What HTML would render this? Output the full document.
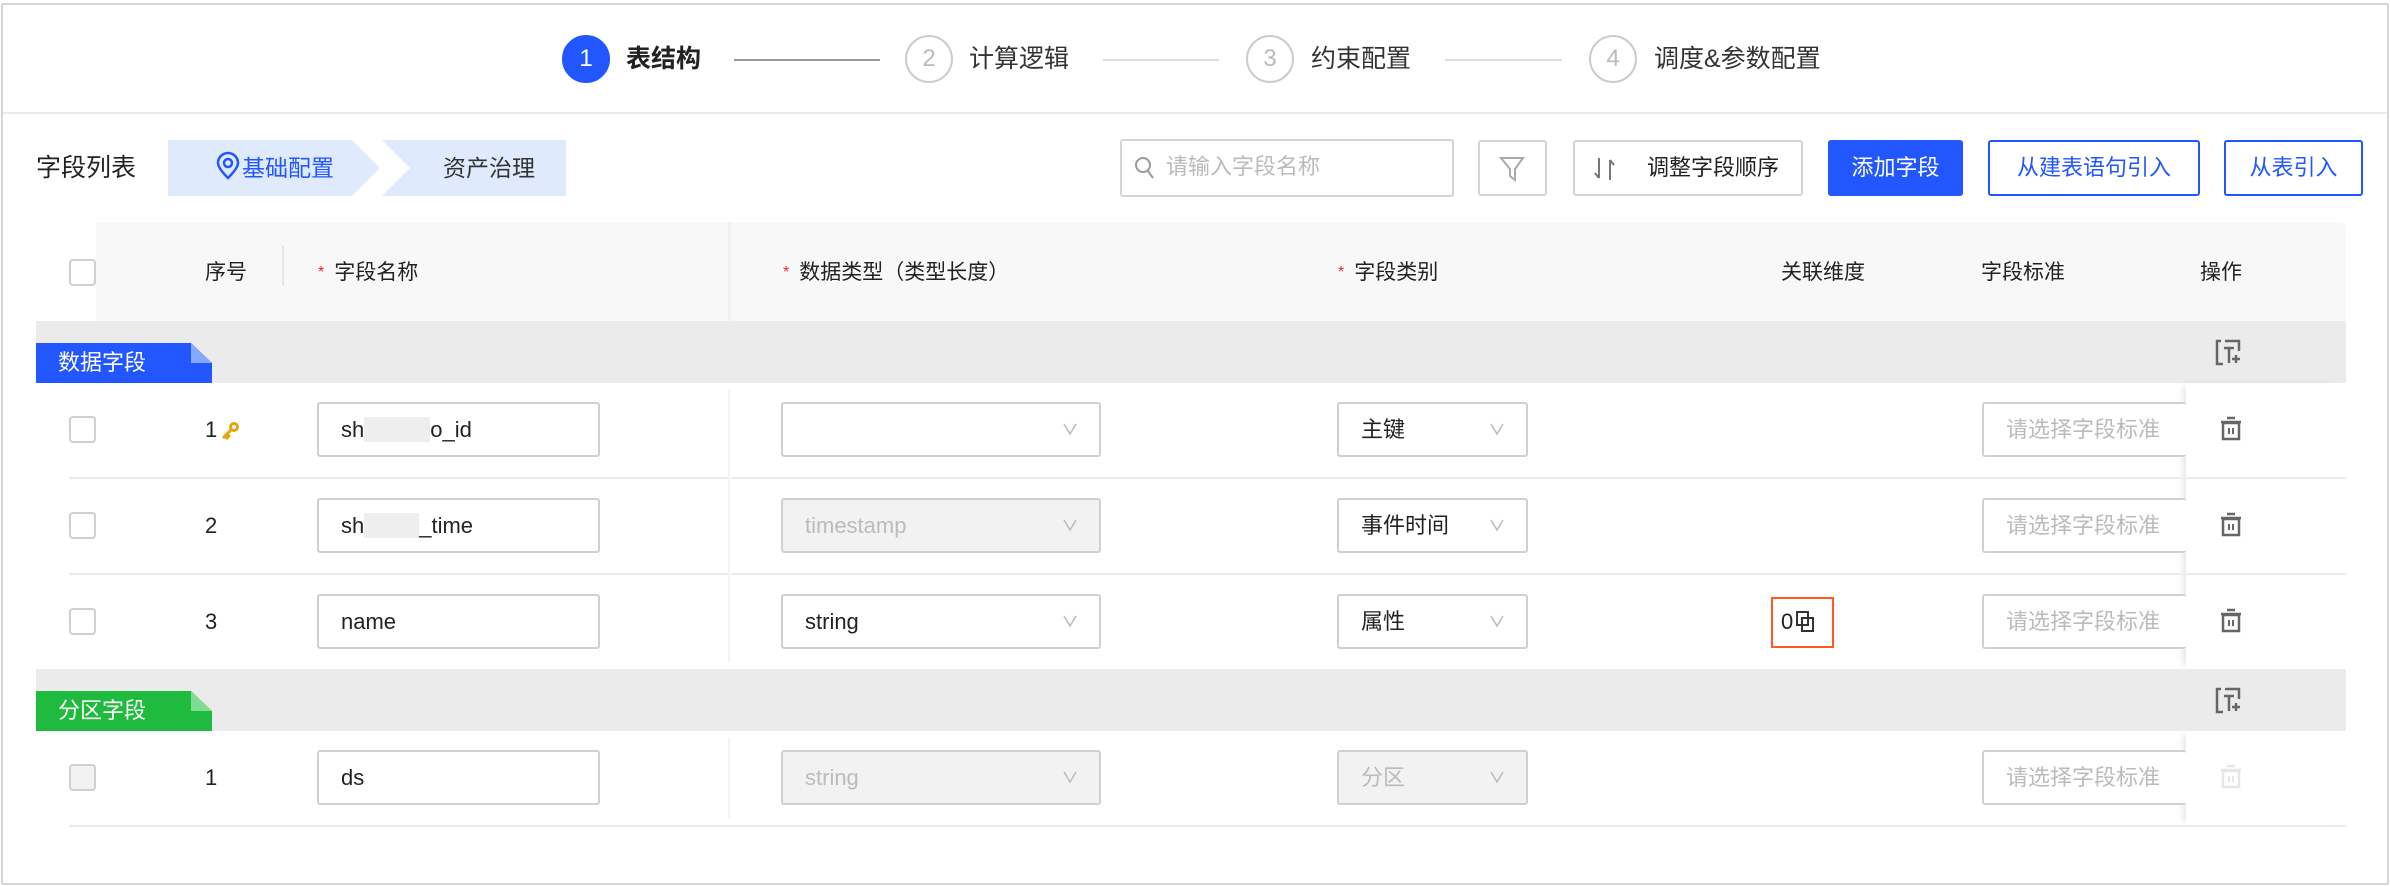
<!DOCTYPE html>
<html><head><meta charset="utf-8"><style>
*{margin:0;padding:0;box-sizing:border-box}
body{width:2390px;height:886px;background:#fff;font-family:"Liberation Sans","Noto Sans CJK SC",sans-serif;color:#222;position:relative;overflow:hidden;font-size:22px}
.a{position:absolute}
.frame{left:1px;top:3px;width:2388px;height:882px;border:2px solid #d6d6d6;border-radius:2px}
.circ{width:48px;height:48px;border-radius:50%;border:2px solid #ccc;color:#bbb;font-size:24px;text-align:center;line-height:44px;top:35px}
.stxt{top:42px;font-size:25px;color:#333;line-height:34px}
.sline{top:59px;height:2px;background:#ddd}
.btn{top:140px;height:56px;border:2px solid #d4d4d4;border-radius:3px;font-size:22px;line-height:52px;text-align:center;background:#fff}
.th{top:258px;font-size:21px;color:#222;line-height:30px}
.star{color:#f5222d;font-size:16px;vertical-align:top;margin-right:10px}
.cb{width:27px;height:27px;border:2px solid #d0d0d0;border-radius:4px;background:#fff}
.inp{height:55px;border:2px solid #d0d0d0;border-radius:3px;background:#fff;font-size:22px;line-height:51px;padding-left:22px;color:#222}
.dis{background:#f2f2f2;color:#bbb}
.arr{position:absolute;right:22px;top:18px;width:14px;height:14px}
.rl{height:2px;background:#ececec;left:69px;width:2277px}
.grp{left:36px;width:2310px;height:62px;background:#ebebeb}
.num{font-size:22px;line-height:30px}
.std{color:#bbb;border-right:none}
</style></head><body>
<div class="a frame"></div>

<!-- steps -->
<div class="a circ" style="left:562px;background:#2256ff;border-color:#2256ff;color:#fff;">1</div>
<div class="a stxt" style="left:626px;font-weight:bold;color:#222">表结构</div>
<div class="a sline" style="left:734px;width:146px;background:#999"></div>
<div class="a circ" style="left:905px">2</div>
<div class="a stxt" style="left:969px">计算逻辑</div>
<div class="a sline" style="left:1103px;width:116px"></div>
<div class="a circ" style="left:1246px">3</div>
<div class="a stxt" style="left:1311px">约束配置</div>
<div class="a sline" style="left:1445px;width:117px"></div>
<div class="a circ" style="left:1589px">4</div>
<div class="a stxt" style="left:1654px">调度&amp;参数配置</div>
<div class="a" style="left:3px;top:112px;width:2384px;height:2px;background:#ebebeb"></div>

<!-- toolbar -->
<div class="a" style="left:36px;top:150px;font-size:25px;line-height:36px;color:#222">字段列表</div>
<svg class="a" style="left:168px;top:140px" width="400" height="56">
<polygon points="0,0 184,0 212,28 184,56 0,56" fill="#dfeafd"/>
<polygon points="214,0 398,0 398,56 214,56 242,28" fill="#dfeafd"/>
<path d="M60 38 C52 30 50 26 50 23 A10 10 0 0 1 70 23 C70 26 68 30 60 38Z" fill="none" stroke="#2256ff" stroke-width="2.5"/>
<circle cx="60" cy="23" r="4" fill="none" stroke="#2256ff" stroke-width="2.5"/>
</svg>
<div class="a" style="left:242px;top:152px;font-size:23px;line-height:32px;color:#2256ff">基础配置</div>
<div class="a" style="left:443px;top:152px;font-size:23px;line-height:32px;color:#333">资产治理</div>

<div class="a" style="left:1120px;top:139px;width:334px;height:58px;border:2px solid #d4d4d4;border-radius:3px"></div>
<svg class="a" style="left:1134px;top:155px" width="22" height="26"><circle cx="9" cy="10" r="7" fill="none" stroke="#999" stroke-width="2"/><line x1="14" y1="16" x2="19" y2="23" stroke="#999" stroke-width="2"/></svg>
<div class="a" style="left:1166px;top:151px;font-size:22px;line-height:32px;color:#bbb">请输入字段名称</div>

<div class="a btn" style="left:1478px;width:69px"></div>
<svg class="a" style="left:1499px;top:155px" width="28" height="28"><path d="M2 3 H24 L16 14 V25 L11 21 V14 Z" fill="none" stroke="#aaa" stroke-width="2"/></svg>
<div class="a btn" style="left:1573px;width:230px;padding-left:50px">调整字段顺序</div>
<svg class="a" style="left:1593px;top:156px" width="28" height="26"><path d="M6 2 V22 M2 17 L6 22" fill="none" stroke="#777" stroke-width="2"/><path d="M17 24 V4 M17 4 L21 9" fill="none" stroke="#777" stroke-width="2"/></svg>
<div class="a btn" style="left:1828px;width:135px;background:#2256ff;border-color:#2256ff;color:#fff">添加字段</div>
<div class="a btn" style="left:1988px;width:212px;border-color:#2256ff;color:#2256ff">从建表语句引入</div>
<div class="a btn" style="left:2224px;width:139px;border-color:#2256ff;color:#2256ff">从表引入</div>

<!-- header -->
<div class="a" style="left:96px;top:222px;width:2250px;height:99px;background:#f8f8f8;border-radius:0 6px 0 0"></div>
<div class="a" style="left:282px;top:246px;width:2px;height:40px;background:#e6e6e6"></div>
<div class="a" style="left:728px;top:222px;width:4px;height:99px;background:linear-gradient(90deg,#eee,#f8f8f8)"></div>
<div class="a cb" style="left:69px;top:259px"></div>
<div class="a th" style="left:205px">序号</div>
<div class="a th" style="left:318px"><span class="star">*</span>字段名称</div>
<div class="a th" style="left:783px"><span class="star">*</span>数据类型（类型长度）</div>
<div class="a th" style="left:1338px"><span class="star">*</span>字段类别</div>
<div class="a th" style="left:1781px">关联维度</div>
<div class="a th" style="left:1981px">字段标准</div>
<div class="a th" style="left:2200px">操作</div>

<!-- group 1 -->
<div class="a grp" style="top:321px"></div>
<svg class="a" style="left:36px;top:343px" width="176" height="40"><polygon points="0,0 155,0 176,20 176,40 0,40" fill="#2256ff"/><polygon points="155,0 176,20 155,20" fill="#86a8ff"/></svg>
<div class="a" style="left:58px;top:347px;color:#fff;font-size:22px;line-height:32px">数据字段</div>
<svg class="a" style="left:2215px;top:339px" width="30" height="28"><path d="M10 2 H24 V12 M6 2 H2 V25 H8" fill="none" stroke="#666" stroke-width="2.5"/><path d="M9 9 H19 M14 9 V24 M17 20 H25 M21 16 V24" fill="none" stroke="#666" stroke-width="2.5"/></svg>

<!-- fixed column -->
<div class="a" style="left:2186px;top:383px;width:160px;height:286px;background:#fff;box-shadow:-6px 0 8px -4px rgba(0,0,0,.12)"></div>
<div class="a" style="left:2186px;top:731px;width:160px;height:95px;background:#fff;box-shadow:-6px 0 8px -4px rgba(0,0,0,.12)"></div>

<!-- rows -->
<div class="a rl" style="top:477px"></div>
<div class="a rl" style="top:573px"></div>
<div class="a rl" style="top:825px"></div>

<!-- col sep shadows -->
<div class="a" style="left:728px;top:390px;width:3px;height:272px;background:linear-gradient(90deg,#f0f0f0,#fff)"></div>
<div class="a" style="left:728px;top:738px;width:3px;height:80px;background:linear-gradient(90deg,#f0f0f0,#fff)"></div>

<!-- row 1 -->
<div class="a cb" style="left:69px;top:416px"></div>
<div class="a num" style="left:205px;top:415px">1</div>
<svg class="a" style="left:221px;top:420px" width="20" height="20"><circle cx="13" cy="7" r="5" fill="#e5a50a"/><circle cx="13" cy="7" r="2" fill="#fff"/><path d="M10 10 L2 18 M4 16 L7 19 M6 14 L9 17" stroke="#e5a50a" stroke-width="3" fill="none"/></svg>
<div class="a inp" style="left:317px;top:402px;width:283px">sh<span style="background:#eee;color:#eee">xxxxxx</span>o_id</div>
<div class="a inp" style="left:781px;top:402px;width:320px"><svg class="arr" viewBox="0 0 14 14"><path d="M1 2 L7 12 L13 2" fill="none" stroke="#bbb" stroke-width="1.5"/></svg></div>
<div class="a inp" style="left:1337px;top:402px;width:191px">主键<svg class="arr" viewBox="0 0 14 14"><path d="M1 2 L7 12 L13 2" fill="none" stroke="#bbb" stroke-width="1.5"/></svg></div>
<div class="a inp std" style="left:1982px;top:402px;width:204px">请选择字段标准</div>

<!-- row 2 -->
<div class="a cb" style="left:69px;top:512px"></div>
<div class="a num" style="left:205px;top:511px">2</div>
<div class="a inp" style="left:317px;top:498px;width:283px">sh<span style="background:#eee;color:#eee">xxxxx</span>_time</div>
<div class="a inp dis" style="left:781px;top:498px;width:320px">timestamp<svg class="arr" viewBox="0 0 14 14"><path d="M1 2 L7 12 L13 2" fill="none" stroke="#bbb" stroke-width="1.5"/></svg></div>
<div class="a inp" style="left:1337px;top:498px;width:191px">事件时间<svg class="arr" viewBox="0 0 14 14"><path d="M1 2 L7 12 L13 2" fill="none" stroke="#bbb" stroke-width="1.5"/></svg></div>
<div class="a inp std" style="left:1982px;top:498px;width:204px">请选择字段标准</div>

<!-- row 3 -->
<div class="a cb" style="left:69px;top:608px"></div>
<div class="a num" style="left:205px;top:607px">3</div>
<div class="a inp" style="left:317px;top:594px;width:283px">name</div>
<div class="a inp" style="left:781px;top:594px;width:320px">string<svg class="arr" viewBox="0 0 14 14"><path d="M1 2 L7 12 L13 2" fill="none" stroke="#bbb" stroke-width="1.5"/></svg></div>
<div class="a inp" style="left:1337px;top:594px;width:191px">属性<svg class="arr" viewBox="0 0 14 14"><path d="M1 2 L7 12 L13 2" fill="none" stroke="#bbb" stroke-width="1.5"/></svg></div>
<div class="a" style="left:1771px;top:597px;width:63px;height:51px;border:2px solid #ff5a1f"></div>
<div class="a" style="left:1781px;top:607px;font-size:22px;line-height:30px">0</div>
<svg class="a" style="left:1795px;top:610px" width="20" height="24"><rect x="2" y="2" width="11" height="13" fill="none" stroke="#333" stroke-width="2"/><rect x="7" y="8" width="11" height="13" fill="none" stroke="#333" stroke-width="2"/></svg>
<div class="a inp std" style="left:1982px;top:594px;width:204px">请选择字段标准</div>

<!-- group 2 -->
<div class="a grp" style="top:669px"></div>
<svg class="a" style="left:36px;top:691px" width="176" height="40"><polygon points="0,0 155,0 176,20 176,40 0,40" fill="#1fbb3e"/><polygon points="155,0 176,20 155,20" fill="#7fdc92"/></svg>
<div class="a" style="left:58px;top:695px;color:#fff;font-size:22px;line-height:32px">分区字段</div>
<svg class="a" style="left:2215px;top:687px" width="30" height="28"><path d="M10 2 H24 V12 M6 2 H2 V25 H8" fill="none" stroke="#666" stroke-width="2.5"/><path d="M9 9 H19 M14 9 V24 M17 20 H25 M21 16 V24" fill="none" stroke="#666" stroke-width="2.5"/></svg>

<!-- row 4 -->
<div class="a cb" style="left:69px;top:764px;background:#f2f2f2"></div>
<div class="a num" style="left:205px;top:763px">1</div>
<div class="a inp" style="left:317px;top:750px;width:283px">ds</div>
<div class="a inp dis" style="left:781px;top:750px;width:320px">string<svg class="arr" viewBox="0 0 14 14"><path d="M1 2 L7 12 L13 2" fill="none" stroke="#bbb" stroke-width="1.5"/></svg></div>
<div class="a inp dis" style="left:1337px;top:750px;width:191px">分区<svg class="arr" viewBox="0 0 14 14"><path d="M1 2 L7 12 L13 2" fill="none" stroke="#bbb" stroke-width="1.5"/></svg></div>
<div class="a inp std" style="left:1982px;top:750px;width:204px">请选择字段标准</div>

<!-- trash icons -->
<svg class="a" style="left:2219px;top:416px" width="24" height="26"><path d="M8 2 H16 M2 6 H22" stroke="#666" stroke-width="2.5"/><rect x="4" y="7" width="16" height="16" fill="none" stroke="#666" stroke-width="2.5"/><path d="M10 12 V18 M14 12 V18" stroke="#666" stroke-width="2"/></svg>
<svg class="a" style="left:2219px;top:512px" width="24" height="26"><path d="M8 2 H16 M2 6 H22" stroke="#666" stroke-width="2.5"/><rect x="4" y="7" width="16" height="16" fill="none" stroke="#666" stroke-width="2.5"/><path d="M10 12 V18 M14 12 V18" stroke="#666" stroke-width="2"/></svg>
<svg class="a" style="left:2219px;top:608px" width="24" height="26"><path d="M8 2 H16 M2 6 H22" stroke="#666" stroke-width="2.5"/><rect x="4" y="7" width="16" height="16" fill="none" stroke="#666" stroke-width="2.5"/><path d="M10 12 V18 M14 12 V18" stroke="#666" stroke-width="2"/></svg>
<svg class="a" style="left:2219px;top:764px" width="24" height="26"><path d="M8 2 H16 M2 6 H22" stroke="#e6e6e6" stroke-width="2.5"/><rect x="4" y="7" width="16" height="16" fill="none" stroke="#e6e6e6" stroke-width="2.5"/><path d="M10 12 V18 M14 12 V18" stroke="#e6e6e6" stroke-width="2"/></svg>
</body></html>
